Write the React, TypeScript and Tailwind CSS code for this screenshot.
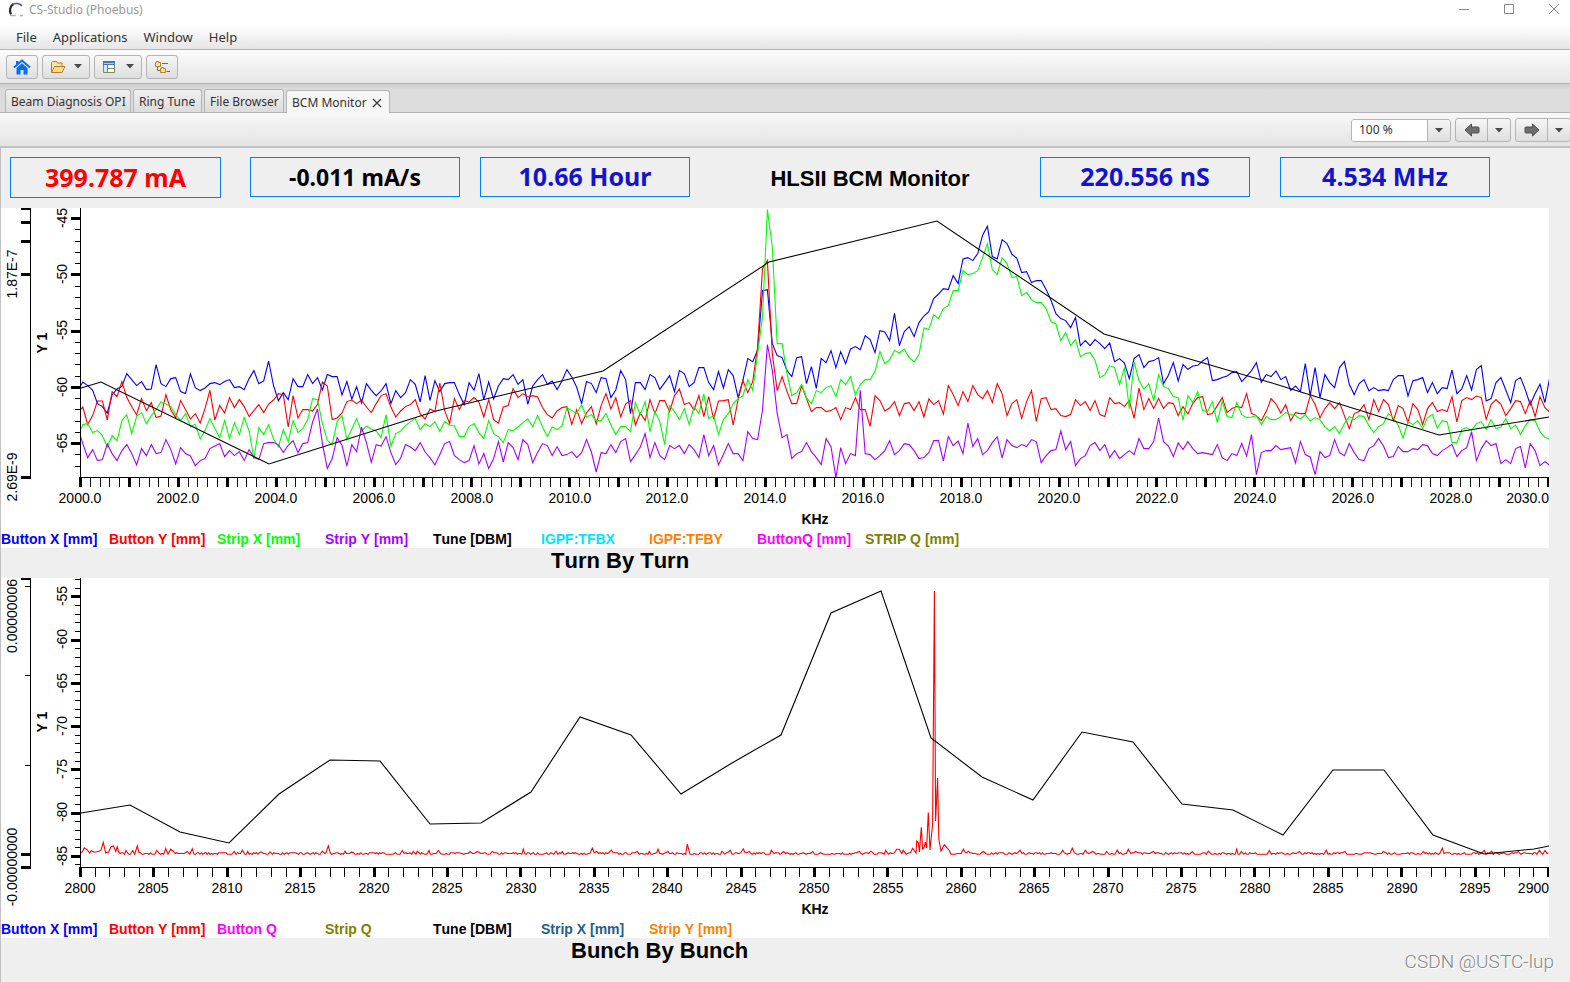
import React from 'react';

type TraceProps = { values: number[]; first: number; color: string };

// Samples are stored in thirds of a chart unit, measured from 8 units above the plot
const buttonX = [
  545, 556, 569, 610, 619, 638, 584, 566, 558, 520, 538, 556, 544, 568, 566, 493, 550, 559, 535, 532,
  574, 580, 521, 562, 571, 563, 550, 547, 553, 544, 538, 562, 559, 568, 535, 511, 550, 542, 482, 555,
  601, 577, 598, 535, 559, 559, 523, 550, 532, 569, 523, 529, 529, 584, 544, 597, 559, 608, 550, 570,
  586, 572, 550, 610, 571, 592, 577, 538, 552, 605, 526, 600, 541, 574, 550, 547, 547, 583, 613, 547,
  570, 520, 598, 545, 596, 557, 535, 538, 523, 552, 538, 612, 557, 538, 523, 552, 542, 568, 542, 508,
  530, 561, 610, 544, 550, 577, 532, 535, 592, 569, 511, 538, 640, 547, 547, 568, 523, 532, 567, 547,
  526, 574, 511, 520, 559, 547, 502, 502, 547, 568, 514, 563, 508, 526, 592, 540, 475, 484, 450, 271,
  268, 430, 466, 472, 511, 529, 472, 469, 550, 499, 564, 475, 487, 451, 502, 454, 490, 446, 439, 448,
  406, 418, 457, 391, 395, 421, 339, 436, 394, 379, 409, 367, 347, 334, 295, 281, 265, 268, 226, 250,
  176, 172, 181, 160, 105, 78, 169, 176, 118, 130, 162, 173, 217, 214, 247, 241, 241, 268, 300, 340,
  355, 361, 382, 352, 436, 421, 436, 418, 430, 445, 428, 484, 475, 488, 535, 475, 463, 502, 484, 481,
  472, 550, 525, 487, 542, 493, 507, 497, 495, 482, 472, 541, 538, 532, 527, 517, 514, 544, 528, 511,
  487, 546, 523, 529, 512, 538, 529, 570, 557, 574, 490, 586, 502, 592, 523, 547, 562, 502, 484, 552,
  583, 550, 538, 571, 562, 571, 568, 571, 538, 526, 526, 587, 541, 538, 532, 577, 547, 580, 562, 565,
  509, 580, 566, 526, 569, 508, 496, 602, 595, 547, 532, 569, 607, 541, 532, 568, 613, 580, 552, 607,
  530,
];

const buttonY = [
  620, 673, 646, 602, 602, 659, 574, 589, 544, 592, 619, 644, 595, 631, 607, 652, 647, 583, 629, 652,
  601, 628, 656, 640, 668, 625, 570, 659, 616, 638, 592, 622, 598, 619, 649, 631, 613, 637, 611, 599,
  580, 583, 680, 586, 653, 628, 628, 632, 612, 545, 557, 658, 653, 638, 604, 599, 610, 599, 620, 637,
  610, 586, 580, 620, 650, 632, 619, 613, 598, 641, 656, 626, 634, 548, 631, 670, 595, 628, 601, 605,
  592, 605, 650, 598, 658, 668, 620, 616, 565, 592, 580, 590, 586, 590, 622, 643, 653, 632, 622, 619,
  672, 628, 670, 638, 619, 671, 616, 580, 626, 592, 650, 611, 601, 674, 638, 661, 598, 640, 601, 601,
  634, 586, 566, 613, 607, 629, 586, 649, 589, 656, 602, 601, 598, 674, 598, 541, 577, 544, 440, 205,
  181, 460, 571, 529, 574, 610, 610, 556, 595, 634, 622, 622, 634, 631, 622, 658, 622, 628, 592, 628,
  628, 678, 586, 601, 632, 623, 604, 646, 610, 607, 631, 604, 650, 596, 613, 601, 641, 556, 583, 616,
  574, 604, 556, 583, 595, 571, 607, 550, 580, 646, 610, 598, 654, 604, 571, 663, 595, 592, 628, 625,
  646, 649, 643, 598, 616, 604, 631, 601, 643, 649, 592, 610, 607, 619, 601, 654, 563, 628, 595, 625,
  595, 625, 607, 610, 646, 619, 641, 610, 592, 589, 643, 640, 616, 592, 637, 625, 619, 622, 580, 640,
  646, 661, 634, 595, 611, 638, 613, 661, 637, 640, 640, 586, 613, 653, 625, 607, 625, 607, 646, 685,
  640, 634, 613, 658, 598, 634, 598, 613, 661, 616, 625, 667, 610, 628, 673, 625, 607, 634, 628, 634,
  589, 665, 601, 592, 598, 587, 592, 657, 613, 598, 612, 646, 625, 601, 604, 640, 601, 649, 589, 622,
  636,
];

const stripX = [
  673, 670, 697, 691, 706, 740, 706, 721, 661, 643, 700, 649, 637, 670, 646, 628, 604, 611, 619, 643,
  661, 640, 679, 673, 716, 691, 655, 685, 712, 661, 715, 667, 703, 652, 692, 775, 682, 703, 673, 716,
  740, 688, 724, 661, 697, 685, 658, 595, 598, 670, 720, 733, 664, 647, 718, 686, 655, 694, 677, 686,
  692, 712, 643, 738, 700, 692, 676, 664, 655, 688, 670, 679, 664, 694, 664, 674, 677, 709, 709, 679,
  670, 697, 715, 661, 700, 709, 727, 688, 691, 680, 667, 656, 679, 645, 680, 709, 680, 688, 677, 622,
  631, 640, 613, 650, 643, 661, 661, 640, 674, 703, 679, 679, 694, 607, 643, 604, 694, 634, 664, 733,
  616, 634, 658, 625, 673, 619, 640, 581, 655, 646, 703, 658, 640, 610, 595, 587, 538, 570, 460, 350,
  28, 140, 430, 430, 520, 586, 577, 553, 592, 610, 571, 577, 562, 556, 589, 538, 553, 529, 584, 553,
  538, 538, 514, 454, 490, 478, 451, 458, 446, 472, 485, 463, 383, 388, 343, 355, 325, 316, 271, 271,
  211, 223, 220, 211, 172, 130, 208, 223, 172, 190, 232, 228, 286, 277, 298, 307, 307, 325, 364, 371,
  421, 397, 436, 418, 469, 460, 457, 480, 532, 523, 496, 502, 553, 502, 625, 485, 541, 566, 550, 601,
  523, 559, 565, 589, 592, 660, 586, 607, 574, 631, 634, 604, 667, 604, 649, 652, 607, 643, 652, 650,
  646, 673, 649, 658, 658, 649, 637, 643, 646, 656, 643, 662, 652, 658, 679, 692, 679, 700, 670, 649,
  658, 646, 649, 676, 697, 679, 670, 640, 652, 675, 713, 664, 673, 661, 685, 652, 643, 683, 661, 664,
  727, 727, 688, 682, 691, 670, 664, 688, 658, 685, 680, 655, 685, 674, 703, 676, 658, 661, 694, 712,
  716,
];

const stripY = [
  730, 772, 748, 781, 778, 731, 760, 781, 751, 733, 760, 794, 745, 766, 733, 760, 757, 718, 748, 791,
  742, 760, 767, 796, 781, 775, 745, 737, 730, 769, 751, 766, 754, 781, 748, 772, 777, 730, 727, 727,
  733, 757, 735, 721, 757, 730, 727, 665, 626, 730, 805, 775, 712, 735, 797, 733, 754, 680, 727, 786,
  733, 737, 709, 757, 793, 774, 733, 740, 751, 727, 755, 772, 794, 763, 730, 724, 766, 778, 787, 781,
  736, 791, 760, 805, 775, 724, 785, 727, 742, 778, 718, 733, 787, 757, 730, 736, 766, 739, 766, 763,
  754, 772, 757, 718, 755, 815, 757, 760, 733, 757, 724, 715, 784, 763, 740, 700, 772, 727, 766, 778,
  736, 745, 736, 760, 733, 748, 772, 703, 766, 736, 794, 763, 730, 760, 760, 781, 694, 715, 718, 630,
  433, 510, 640, 712, 703, 775, 760, 754, 727, 754, 772, 793, 715, 739, 832, 742, 790, 760, 766, 570,
  760, 763, 778, 766, 751, 721, 763, 751, 730, 733, 751, 775, 772, 757, 721, 721, 782, 709, 736, 722,
  760, 668, 739, 715, 763, 751, 727, 709, 773, 718, 736, 742, 733, 739, 718, 724, 787, 766, 751, 748,
  692, 748, 724, 796, 775, 766, 736, 727, 751, 733, 772, 751, 775, 763, 751, 763, 715, 745, 745, 724,
  653, 724, 737, 769, 728, 748, 724, 745, 760, 757, 760, 763, 733, 772, 781, 760, 766, 730, 767, 703,
  823, 757, 751, 751, 736, 748, 745, 742, 788, 724, 763, 770, 823, 754, 772, 766, 718, 757, 766, 730,
  757, 778, 781, 745, 736, 715, 737, 772, 769, 739, 754, 754, 745, 748, 733, 736, 760, 766, 751, 742,
  732, 769, 751, 742, 694, 781, 745, 721, 736, 730, 790, 778, 790, 745, 739, 803, 730, 751, 796, 784,
  795,
];

// [x, height] of the peaks standing out of the noise floor, in thirds of a chart unit
const peaks: [number, number][] = [
  [253, 20], [262, 14], [274, 12], [290, 8], [303, 13], [310, 36], [332, 22], [340, 26], [352, 23], [378, 12],
  [398, 12], [412, 26], [470, 12], [497, 18], [512, 16], [520, 10], [562, 9], [577, 17], [617, 7], [703, 9],
  [727, 13], [743, 9], [783, 8], [810, 8], [967, 10], [985, 26], [1035, 10], [1055, 7], [1207, 12], [1240, 9],
  [1252, 10], [1287, 12], [1315, 12], [1410, 9], [1432, 9], [1477, 9], [1570, 16], [1668, 10], [1687, 9],
  [1777, 19], [1790, 9], [1834, 13], [1912, 9], [1948, 9], [1974, 16], [2004, 9], [2062, 31], [2166, 10],
  [2191, 13], [2230, 17], [2248, 9], [2314, 13], [2350, 9], [2438, 9], [2578, 10], [2613, 10], [2657, 13],
  [2690, 16], [2698, 16], [2710, 13], [2738, 19], [2750, 40], [2755, 36], [2764, 82], [2776, 37], [2785, 126],
  [2833, 29], [2848, 12], [2890, 16], [2905, 10], [2950, 9], [3060, 13], [3188, 13], [3217, 19], [3256, 13],
  [3278, 9], [3320, 9], [3352, 13], [3385, 16], [3407, 9], [3460, 9], [3577, 9], [3625, 10], [3710, 16],
  [3724, 9], [3808, 12], [3898, 9], [3979, 13], [4035, 9], [4150, 9], [4270, 9], [4327, 19], [4453, 12],
  [4475, 10], [4555, 9], [4618, 12], [4635, 12],
];

const tuneTop = '80,180 100,174 268,256 435,203 602,163 768,54 936,13 1103,126 1271,175 1438,227 1548,209';

const tuneBottom =
  '80,235 129,227 179,254 228,265 278,216 329,182 379,183 429,246 480,245 530,214 579,139 630,157 680,216 ' +
  '731,185 780,157 830,35 880,13 930,160 981,199 1032,222 1081,154 1132,164 1181,226 1232,232 1282,257 ' +
  '1332,192 1383,192 1432,257 1483,276 1533,271 1548,268';

const topLegend = [
  { label: 'Button X [mm]', color: 'text-[#0000ff]' },
  { label: 'Button Y [mm]', color: 'text-[#ff0000]' },
  { label: 'Strip X [mm]', color: 'text-[#00ff00]' },
  { label: 'Strip Y [mm]', color: 'text-[#aa00ff]' },
  { label: 'Tune [DBM]', color: 'text-black' },
  { label: 'IGPF:TFBX', color: 'text-[#00e5ff]' },
  { label: 'IGPF:TFBY', color: 'text-[#ff7f00]' },
  { label: 'ButtonQ [mm]', color: 'text-[#ff00ff]' },
  { label: 'STRIP Q [mm]', color: 'text-[#808000]' },
];

const bottomLegend = [
  { label: 'Button X [mm]', color: 'text-[#0000ff]' },
  { label: 'Button Y [mm]', color: 'text-[#ff0000]' },
  { label: 'Button Q', color: 'text-[#ff00ff]' },
  { label: 'Strip Q', color: 'text-[#808000]' },
  { label: 'Tune [DBM]', color: 'text-black' },
  { label: 'Strip X [mm]', color: 'text-[#215d8f]' },
  { label: 'Strip Y [mm]', color: 'text-[#ff7f00]' },
];

const range = (n: number) => Array.from({ length: n }, (_, i) => i);

const Trace: React.FC<TraceProps> = ({ values, first, color }) => {
  const points = values.map((v, i) => `${(81.8 + i * 4.89).toFixed(1)},${(v / 3 - 7.7).toFixed(1)}`);
  return <polyline points={`79.6,${(first / 3 - 7.7).toFixed(1)} ${points.join(' ')}`} stroke={color} fill="none" />;
};

// Noise floor with the beam line at 2858 KHz
const noisePoints = () => {
  let seed = 7;
  const pts: [number, number][] = [];
  for (let x = 80; x < 1548; x += 1.45) {
    seed = (seed * 16807) % 2147483647;
    const r = seed / 2147483647;
    const t = (x + 1) * 3;
    if (t > 2735 && t < 2845) continue;
    if (peaks.some(([p]) => Math.abs(p - t) < 4)) continue;
    pts.push([x, 276.3 - (r > 0.72 ? 1.6 : r > 0.4 ? 0.8 : 0) - (x < 118 ? 1.3 : 0)]);
  }
  peaks.forEach(([p, h]) => pts.push([p / 3 - 1, 276.5 - h / 3]));
  pts.push([915, 275], [918.4, 274], [921.6, 271], [923, 270], [925.6, 270], [929, 272]);
  pts.push([931.6, 246], [933.4, 13], [934.6, 243], [936.6, 200], [937.8, 261], [940, 273]);
  return pts
    .sort((a, b) => a[0] - b[0])
    .map(([x, y]) => `${x.toFixed(1)},${y.toFixed(1)}`)
    .join(' ');
};

const noise = noisePoints();

const VerticalText: React.FC<{ x: number; y: number; bold?: boolean; children: React.ReactNode }> = ({ x, y, bold, children }) => (
  <text transform={`translate(${x} ${y}) rotate(-90)`} textAnchor="middle" fontWeight={bold ? 700 : 400}>
    {children}
  </text>
);

const TopChart = () => (
  <svg viewBox="0 0 1548 322" className="block w-full h-auto" fontFamily='"Liberation Sans", Arial, sans-serif' fontSize={14}>
    <g fill="none" strokeWidth={1.1}>
      <Trace values={buttonX} first={556} color="#0000ff" />
      <Trace values={buttonY} first={628} color="#ff0000" />
      <Trace values={stripX} first={688} color="#00ff00" />
      <Trace values={stripY} first={709} color="#aa00ff" />
      <polyline points={tuneTop} stroke="#000" />
    </g>
    <g shapeRendering="crispEdges">
      <rect x={29} y={0} width={1} height={270} />
      {[0, 13, 32, 65, 268].map((y) => (
        <rect key={y} x={20} y={y} width={10} height={y ? 3 : 2} />
      ))}
      <rect x={79} y={0} width={1} height={270} />
      <rect x={79} y={269} width={1469} height={1} />
      {range(23).map((i) => {
        const y = Math.round(10 + i * 11.26);
        return i % 5 === 0 ? (
          <rect key={i} x={70} y={y - 1} width={9} height={3} />
        ) : (
          <rect key={i} x={74} y={y} width={5} height={1} />
        );
      })}
      {range(151).map((i) => {
        const x = Math.round(79 + i * 9.786);
        return <rect key={i} x={i % 5 === 0 ? x - 1 : x} y={269} width={i % 5 === 0 ? 3 : 1} height={10} />;
      })}
    </g>
    {range(5).map((i) => (
      <VerticalText key={i} x={66} y={Math.round(10 + i * 56.2)}>{-45 - i * 5}</VerticalText>
    ))}
    <VerticalText x={16} y={66}>1.87E-7</VerticalText>
    <VerticalText x={16} y={269}>2.69E-9</VerticalText>
    <VerticalText x={46} y={135} bold>Y 1</VerticalText>
    {range(15).map((i) => (
      <text key={i} x={Math.round(79 + i * 97.9)} y={295} textAnchor="middle">{(2000 + i * 2).toFixed(1)}</text>
    ))}
    <text x={1548} y={295} textAnchor="end">2030.0</text>
    <text x={814} y={316} textAnchor="middle" fontWeight={700}>KHz</text>
  </svg>
);

const BottomChart = () => (
  <svg viewBox="0 0 1548 342" className="block w-full h-auto" fontFamily='"Liberation Sans", Arial, sans-serif' fontSize={14}>
    <g fill="none" strokeWidth={1.1}>
      <polyline points={noise} stroke="#ff0000" />
      <polyline points={tuneBottom} stroke="#000" />
    </g>
    <g shapeRendering="crispEdges">
      <rect x={29} y={0} width={1} height={290} />
      {[0, 275, 288].map((y) => (
        <rect key={y} x={20} y={y} width={10} height={y ? 3 : 2} />
      ))}
      {[8, 97, 187].map((y) => (
        <rect key={y} x={24} y={y} width={5} height={1} />
      ))}
      <rect x={79} y={0} width={1} height={290} />
      <rect x={79} y={289} width={1469} height={1} />
      {range(34).map((i) => {
        const y = Math.round(1 + i * 8.65);
        return i % 5 === 2 ? (
          <rect key={i} x={70} y={y - 1} width={9} height={3} />
        ) : (
          <rect key={i} x={74} y={y} width={5} height={1} />
        );
      })}
      {range(101).map((i) => {
        const x = Math.round(79 + i * 14.68);
        return <rect key={i} x={i % 5 === 0 ? x - 1 : x} y={289} width={i % 5 === 0 ? 3 : 1} height={10} />;
      })}
    </g>
    {range(7).map((i) => (
      <VerticalText key={i} x={66} y={Math.round(18 + i * 43.27)}>{-55 - i * 5}</VerticalText>
    ))}
    <VerticalText x={16} y={38}>0.00000006</VerticalText>
    <VerticalText x={16} y={289}>-0.00000000</VerticalText>
    <VerticalText x={46} y={144} bold>Y 1</VerticalText>
    {range(20).map((i) => (
      <text key={i} x={Math.round(79 + i * 73.42)} y={315} textAnchor="middle">{2800 + i * 5}</text>
    ))}
    <text x={1548} y={315} textAnchor="end">2900</text>
    <text x={814} y={336} textAnchor="middle" fontWeight={700}>KHz</text>
  </svg>
);

const Legend: React.FC<{ items: { label: string; color: string }[] }> = ({ items }) => (
  <ul className="flex h-[18px] text-sm leading-[18px] font-bold [font-kerning:none]">
    {items.map((item) => (
      <li key={item.label} className={`w-[108px] shrink-0 whitespace-nowrap ${item.color}`}>{item.label}</li>
    ))}
  </ul>
);

const Caret = () => (
  <svg width="8" height="5" viewBox="0 0 8 5"><path d="M0 0h8L4 4.5z" fill="#4a4a4a" /></svg>
);

const Arrow: React.FC<{ flip?: boolean }> = ({ flip }) => (
  <svg width="16" height="14" viewBox="0 0 16 14" className={flip ? 'rotate-180' : ''}>
    <path d="M1 7 7.5 1v3H14q1 0 1 1v4q0 1-1 1H7.5v3z" fill="#6e6e6e" stroke="#4d4d4d" />
  </svg>
);

const Readout: React.FC<{ value: string; className: string }> = ({ value, className }) => (
  <output className={`flex shrink-0 items-center justify-center border border-[#0080ff] font-['Noto_Sans',sans-serif] font-bold whitespace-nowrap ${className}`}>
    {value}
  </output>
);

const buttonStyle = 'flex items-center justify-center border border-[#b4b4b4] bg-linear-to-b from-[#f6f6f6] to-[#dedede]';
const tabStyle = 'flex h-[23px] items-center rounded-t-[3px] border border-b-0 border-[#b4b4b4] px-[5px] pt-px whitespace-nowrap';
const windowButton = 'flex w-8 justify-center pt-px';

const App: React.FC = () => {
  return (
    <div className="min-h-screen overflow-x-hidden bg-[#efefef] font-['Liberation_Sans',Arial,sans-serif] text-black">
      <header className="font-['Noto_Sans',sans-serif] text-xs text-[#333]">
        {/* Window title */}
        <div className="flex h-[25px] items-start bg-white pt-[2px] pl-2 text-[#999]">
          <svg width="16" height="16" viewBox="0 0 16 16" fill="none">
            <path d="M5.5 2C2 4 1 8.500 3 12.500" stroke="#2a2350" strokeWidth="2.200" />
            <path d="M4.500 2.500C7 1 11.500 1 14 4" stroke="#5b5488" strokeWidth="1.600" />
            <path d="M2 13.500h6M12 13.500h3" stroke="#b5b5c5" strokeWidth="1.500" />
          </svg>
          <span className="ml-[5px] text-xs leading-4">CS-Studio (Phoebus)</span>
          <div className="ml-auto flex gap-[13px]">
            <button aria-label="Minimize" className={windowButton}><svg width="12" height="12" stroke="#888" fill="none"><path d="M1 6.500h10" /></svg></button>
            <button aria-label="Maximize" className={windowButton}><svg width="12" height="12" stroke="#888" fill="none"><path d="M1.500 1.500h9v9h-9z" /></svg></button>
            <button aria-label="Close" className={windowButton}><svg width="12" height="12" stroke="#888" fill="none"><path d="m1 1 10 10M11 1 1 11" /></svg></button>
          </div>
        </div>

        <nav className="flex h-[25px] items-center gap-4 border-b border-[#b4b4b4] bg-linear-to-b from-white to-[#e6e6e6] pt-[2px] pl-4 text-[13px]">
          <button>File</button>
          <button>Applications</button>
          <button>Window</button>
          <button>Help</button>
        </nav>

        {/* Main toolbar */}
        <div className="flex h-[34px] items-center gap-1 border-b border-[#b4b4b4] bg-linear-to-b from-[#fbfbfb] to-[#e6e6e6] pl-[6px]">
          <button aria-label="Home" className={`h-6 w-8 rounded-[3px] ${buttonStyle}`}>
            <svg width="18" height="16" viewBox="0 0 18 16">
              <path d="M3 2h2.500v2L3 6z" fill="#0a6cf5" />
              <path d="M1 8.500 9 1.500l8 7" fill="none" stroke="#0a6cf5" strokeWidth="2" />
              <path d="M3.500 9 9 4.200 14.500 9v6.500h-4V11h-3v4.500h-4z" fill="#0a6cf5" />
            </svg>
          </button>
          <button aria-label="Open" className={`h-6 w-12 gap-2 rounded-[3px] ${buttonStyle}`}>
            <svg width="16" height="14" viewBox="0 0 16 14" fill="#fbe3a4" stroke="#b87a30">
              <path d="M1.500 12V2.500L2.500 1.500h4l1 1.500h4.500V6" />
              <path d="m1.500 12.500 3-6H15l-3 6z" fill="#fddc8c" />
            </svg>
            <Caret />
          </button>
          <button aria-label="Layouts" className={`h-6 w-12 gap-[10px] rounded-[3px] ${buttonStyle}`}>
            <svg width="14" height="14" viewBox="0 0 14 14">
              <path d="M1.500 1.500h11v11h-11z" fill="#fffdf0" stroke="#7d8a60" />
              <path d="M1 1h12v4H1z" fill="#4179b8" />
              <path d="M2 3h10v1H2z" fill="#a9cdf0" />
              <path d="M2 5h3v7H2z" fill="#cfe4f8" />
              <path d="M5.500 5v7.500M5.500 8.500h7" stroke="#7d8a60" />
            </svg>
            <Caret />
          </button>
          <button aria-label="Tree" className={`h-6 w-8 rounded-[3px] ${buttonStyle}`}>
            <svg width="16" height="14" viewBox="0 0 16 14" fill="#fde39b" stroke="#b8802c">
              <path d="M1.500 2.500h1v-1h2v1h2v4h-5z" />
              <path d="M6.500 8.500h1v-1h2v1h2v4h-5z" />
              <path d="M3.500 7v3.500H6M8 3.500h6M12.500 11.500H16" fill="none" stroke="#4b6fae" />
            </svg>
          </button>
        </div>

        <div role="tablist" className="flex h-[29px] items-end gap-[2px] border-b border-[#b4b4b4] bg-linear-to-b from-[#cfcfcf] via-[#dcdcdc] via-20% to-[#dcdcdc] pl-[5px]">
          <button role="tab" className={`w-[126px] bg-linear-to-b from-[#f0f0f0] to-[#dcdcdc] ${tabStyle}`}>Beam Diagnosis OPI</button>
          <button role="tab" className={`w-[69px] bg-linear-to-b from-[#f0f0f0] to-[#dcdcdc] ${tabStyle}`}>Ring Tune</button>
          <button role="tab" className={`w-20 bg-linear-to-b from-[#f0f0f0] to-[#dcdcdc] ${tabStyle}`}>File Browser</button>
          <button role="tab" aria-selected="true" className={`-mb-px w-[104px] gap-[5px] bg-[#f6f6f6] ${tabStyle}`}>
            BCM Monitor
            <svg width="10" height="10" viewBox="0 0 10 10" stroke="#444" strokeWidth="1.400"><path d="m1 1 8 8M9 1 1 9" /></svg>
          </button>
        </div>

        {/* Zoom and navigation */}
        <div className="flex h-[35px] items-center justify-end gap-1 border-b-2 border-[#c0c0c0] bg-linear-to-b from-[#f8f8f8] to-[#e4e4e4] pt-px">
          <div className="flex h-[23px] w-[100px] overflow-hidden rounded-[3px] border border-[#b4b4b4]">
            <input aria-label="Zoom" defaultValue="100 %" className="w-0 flex-1 bg-white pl-[7px]" />
            <button aria-label="Zoom levels" className="flex w-[23px] items-center justify-center border-l border-[#b4b4b4] bg-linear-to-b from-[#f6f6f6] to-[#dedede]"><Caret /></button>
          </div>
          <div className="flex">
            <button aria-label="Back" className={`h-6 w-[33px] rounded-l-[3px] ${buttonStyle}`}><Arrow /></button>
            <button aria-label="Back history" className={`-ml-px h-6 w-6 rounded-r-[3px] ${buttonStyle}`}><Caret /></button>
          </div>
          <div className="-mr-px flex">
            <button aria-label="Forward" className={`h-6 w-[33px] rounded-l-[3px] ${buttonStyle}`}><Arrow flip /></button>
            <button aria-label="Forward history" className={`-ml-px h-6 w-6 rounded-r-[3px] ${buttonStyle}`}><Caret /></button>
          </div>
        </div>
      </header>

      <main className="min-h-[834px] border-l border-[#c0c0c0]">
        <div className="flex h-[60px] items-start pt-[9px] pl-[9px]">
          <Readout value="399.787 mA" className="h-[41px] w-[211px] text-[25px] text-[#ff0000]" />
          <Readout value="-0.011 mA/s" className="ml-[29px] h-10 w-[210px] text-[23px] text-black" />
          <Readout value="10.66 Hour" className="ml-5 h-10 w-[210px] text-[25px] text-[#1414c8]" />
          <h1 className="flex h-[42px] flex-1 items-center justify-center pl-[10px] text-[22px] font-bold whitespace-nowrap">HLSII BCM Monitor</h1>
          <Readout value="220.556 nS" className="h-10 w-[210px] text-[25px] text-[#1414c8]" />
          <Readout value="4.534 MHz" className="mr-20 ml-[30px] h-10 w-[210px] text-[25px] text-[#1414c8]" />
        </div>

        <section className="mr-[21px] bg-white">
          <TopChart />
          <Legend items={topLegend} />
        </section>
        <h2 className="h-[30px] pl-[550px] text-[22px] leading-[26px] font-bold [font-kerning:none]">Turn By Turn</h2>

        <section className="mr-[21px] bg-white">
          <BottomChart />
          <Legend items={bottomLegend} />
        </section>
        <div className="flex h-11 items-start justify-between pr-4 pl-[570px]">
          <h2 className="text-[22px] leading-[26px] font-bold [font-kerning:none]">Bunch By Bunch</h2>
          <span className="pt-3 font-['Roboto',sans-serif] text-[19px] leading-6 font-light text-[#888] [text-shadow:1px_1px_0_#fff]">CSDN @USTC-lup</span>
        </div>
      </main>
    </div>
  );
};

export default App;
